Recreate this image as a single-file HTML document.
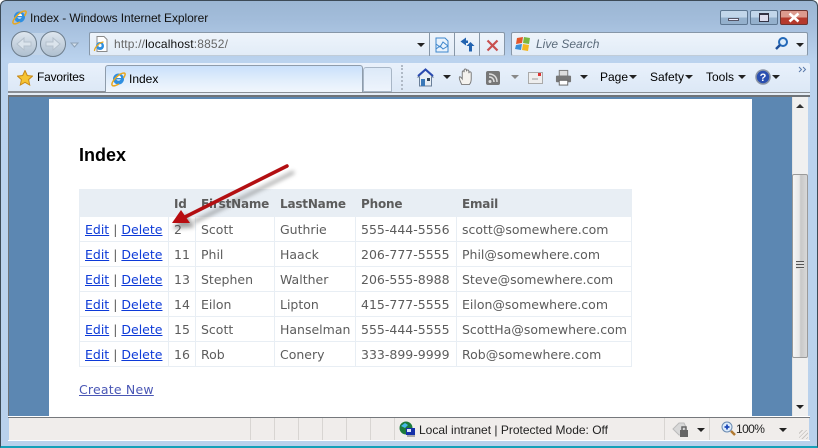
<!DOCTYPE html>
<html><head><meta charset="utf-8"><style>
*{box-sizing:border-box}
html,body{margin:0;padding:0;width:818px;height:448px;overflow:hidden;background:#fff}
body{position:relative;font-family:"Liberation Sans",sans-serif}
.a{position:absolute}
.t{position:absolute;white-space:nowrap;font:12px "Liberation Sans",sans-serif;color:#000}
.c{position:absolute;white-space:nowrap;font:12.5px/16px "DejaVu Sans",sans-serif;color:#5c5c5c;margin-top:1px}
.h{font:bold 12px/16px "DejaVu Sans",sans-serif;color:#5c5c5c;letter-spacing:-.2px}
.c u{color:#0d3ad8;text-decoration:underline}
.v{position:absolute;width:1px;background:#e8eef4}
.g{position:absolute;height:1px;background:#e8eef4;left:79px;width:553px}
.s{position:absolute;top:418px;height:22px;width:1px;background:#d8d5d2}
.tb{position:absolute;font:12px "Liberation Sans",sans-serif;top:69px;color:#000;white-space:nowrap}
.ar{position:absolute;width:0;height:0;border-left:4px solid transparent;border-right:4px solid transparent;border-top:4px solid #222}
</style></head><body>
<div class="a" style="left:0;top:0;width:818px;height:448px;background:linear-gradient(#9bb6d3 0,#a3bddb 20px,#bbd3ee 60px,#b9d1ec 100%);border:1px solid #3c4a56;border-bottom:2px solid #16a0b8;border-radius:6px 6px 0 0"></div>

<!-- title -->
<svg class="a" style="left:11px;top:9px" width="16" height="16" viewBox="0 0 16 16"><circle cx="8.500" cy="8" r="5.500" fill="#2f8fe0"/><circle cx="8.500" cy="7" r="2.600" fill="#fff"/><rect x="5" y="7" width="8" height="1.400" fill="#2f8fe0"/><path d="M2 14C1 11 9 2 14 2c2 0 1 3-.5 5M2 14c1 2 5 0 7-1" fill="none" stroke="#e8a820" stroke-width="1.500"/></svg>
<div class="t" style="left:30px;top:10px;line-height:16px;letter-spacing:-.08px;color:#111">Index - Windows Internet Explorer</div>

<!-- window buttons -->
<div class="a" style="left:720px;top:10px;width:28px;height:15px;border:1px solid #5d7690;border-radius:2px;background:linear-gradient(#c2d6ea 50%,#94b0cc 50%)"></div>
<div class="a" style="left:728px;top:18px;width:11px;height:3px;background:#eef;border:1px solid #556"></div>
<div class="a" style="left:750px;top:10px;width:28px;height:15px;border:1px solid #5d7690;border-radius:2px;background:linear-gradient(#c2d6ea 50%,#94b0cc 50%)"></div>
<div class="a" style="left:759px;top:13px;width:10px;height:9px;background:#dde;border:1px solid #334;border-top-width:2px"></div>
<div class="a" style="left:780px;top:10px;width:28px;height:15px;border:1px solid #6e3430;border-radius:2px;background:linear-gradient(#dc9a8e 50%,#b5392c 50%)"></div>
<svg class="a" style="left:788px;top:12px" width="12" height="11" viewBox="0 0 12 11"><path d="M1.500 1.500l9 8M10.500 1.500l-9 8" stroke="#fff" stroke-width="2.600"/></svg>

<!-- nav -->
<svg class="a" style="left:10px;top:30px" width="72" height="28" viewBox="0 0 72 28">
<rect x="8" y="3" width="48" height="22" rx="10" fill="#c2d4e8"/>
<defs><linearGradient id="b" x1="0" y1="0" x2="0" y2="1"><stop offset="0" stop-color="#dfe7ef"/><stop offset="1" stop-color="#aebfcf"/></linearGradient></defs>
<circle cx="14" cy="14" r="12.500" fill="url(#b)" stroke="#6d7d8c"/><circle cx="43" cy="14" r="12.500" fill="url(#b)" stroke="#6d7d8c"/>
<path d="M21 12h-7V8l-7 6 7 6v-4h7z" fill="#dbe4ec" stroke="#b4c0cc"/><path d="M36 12h7V8l7 6-7 6v-4h-7z" fill="#dbe4ec" stroke="#b4c0cc"/>
<path d="M61 13h7l-3.500 4z" fill="#d4e0ec" stroke="#8ea2b6"/></svg>

<!-- address -->
<div class="a" style="left:89px;top:32px;width:416px;height:24px;background:linear-gradient(#eef4fb,#e2ecf7);border:1px solid #8797a8;border-bottom-color:#c0ccd8;border-radius:2px"></div>
<svg class="a" style="left:93px;top:36px" width="16" height="16" viewBox="0 0 16 16"><path d="M4 .5h7l3 3v12H4z" fill="#fff" stroke="#8a8a8a"/><circle cx="7" cy="10" r="4" fill="#2f8fe0"/><circle cx="7" cy="9.500" r="1.600" fill="#fff"/><path d="M1.500 15C1 12 7 6 10.500 6" fill="none" stroke="#e8a820" stroke-width="1.300"/></svg>
<div class="t" style="left:114px;top:37px;line-height:15px;letter-spacing:.15px;color:#666">http://<span style="color:#111">localhost</span>:8852/</div>
<div class="ar" style="left:417px;top:43px"></div>
<div class="a" style="left:429px;top:32px;width:1px;height:24px;background:#8797a8"></div>
<div class="a" style="left:454px;top:32px;width:1px;height:24px;background:#8797a8"></div>
<div class="a" style="left:479px;top:32px;width:1px;height:24px;background:#8797a8"></div>
<svg class="a" style="left:435px;top:37px" width="14" height="16" viewBox="0 0 14 16"><path d="M1 1h9l3 3v11H1z" fill="#e8f2fc" stroke="#3d86cc"/><path d="M1 7l4 3 3-5 5 4M1 12l4-3 3 3 5-3" fill="none" stroke="#3d86cc"/></svg>
<svg class="a" style="left:459px;top:37px" width="16" height="16" viewBox="0 0 16 16"><path d="M7 .5L1.500 4.500 7 8.500V6h2V3.500H7z" fill="#2263b0"/><path d="M10 14.500V9H7.500l4-4 4 4H13v5.500z" fill="#2263b0"/></svg>
<svg class="a" style="left:486px;top:39px" width="13" height="13" viewBox="0 0 13 13"><path d="M1.500 1.500l10 10M11.500 1.500l-10 10" stroke="#c85050" stroke-width="2.200"/></svg>

<!-- search -->
<div class="a" style="left:511px;top:32px;width:297px;height:24px;background:linear-gradient(#eef4fb,#e2ecf7);border:1px solid #8797a8;border-bottom-color:#c0ccd8;border-radius:2px"></div>
<svg class="a" style="left:515px;top:36px" width="16" height="16" viewBox="0 0 16 16"><path d="M2 2l6-1-1 6-6 1z" fill="#e2562a"/><path d="M9 1l6 1-1 6-6-1z" fill="#7ab840"/><path d="M1 9l6-1-1 6-6-1z" fill="#3a8fd8"/><path d="M8 8l6 1-1 6-6-1z" fill="#f4b820"/></svg>
<div class="t" style="left:536px;top:37px;font:italic 12px/15px 'Liberation Sans',sans-serif;color:#5a6a7a">Live Search</div>
<svg class="a" style="left:773px;top:36px" width="16" height="16" viewBox="0 0 16 16"><circle cx="10" cy="6" r="4" fill="#dcecfb" stroke="#2268b8" stroke-width="2"/><path d="M7 9l-4 4" stroke="#1e4f9a" stroke-width="2.500"/></svg>
<div class="ar" style="left:796px;top:43px"></div>

<!-- toolbar -->
<div class="a" style="left:8px;top:63px;width:802px;height:29px;background:linear-gradient(#e9f1fb,#dce8f6);border-radius:2px 2px 0 0"></div>
<div class="a" style="left:8px;top:91px;width:98px;height:1px;background:#8a8f96"></div>
<svg class="a" style="left:17px;top:70px" width="16" height="16" viewBox="0 0 16 16"><path d="M8 .5l2.300 5 5.200.6-3.900 3.500 1.100 5.400L8 12.300 3.300 15l1.100-5.400L.5 6.100l5.200-.6z" fill="#f6c432" stroke="#c88a18"/></svg>
<div class="tb" style="left:37px;top:70px;letter-spacing:-.2px">Favorites</div>
<div class="a" style="left:105px;top:65px;width:258px;height:28px;background:linear-gradient(#c9e0fb,#e2eefb 55%,#f2f7fd);border:1px solid #8e9cab;border-bottom:none;border-radius:3px 3px 0 0"></div>
<svg class="a" style="left:110px;top:71px" width="16" height="16" viewBox="0 0 16 16"><circle cx="8.500" cy="8" r="5.500" fill="#2f8fe0"/><circle cx="8.500" cy="7" r="2.600" fill="#fff"/><rect x="5" y="7" width="8" height="1.400" fill="#2f8fe0"/><path d="M2 14C1 11 9 2 14 2c2 0 1 3-.5 5M2 14c1 2 5 0 7-1" fill="none" stroke="#e8a820" stroke-width="1.500"/></svg>
<div class="tb" style="left:129px;top:72px">Index</div>
<div class="a" style="left:363px;top:67px;width:29px;height:25px;background:linear-gradient(#dce9f8,#eef4fc);border:1px solid #a8b6c6;border-radius:3px 3px 0 0"></div>
<div class="a" style="left:401px;top:65px;height:25px;border-left:2px dotted #b0bac6"></div>

<svg class="a" style="left:416px;top:68px" width="19" height="19" viewBox="0 0 19 19"><path d="M9.500 2L2 9h1.500v9h12V9H17z" fill="#e8eef4" stroke="#6a7f99"/><path d="M2 8l7.500-6.500L17 8" fill="none" stroke="#2a4ab0" stroke-width="2"/><rect x="5" y="11" width="4" height="7" fill="#3a78b8"/><rect x="11" y="10" width="3" height="3" fill="#345"/></svg>
<div class="ar" style="left:443px;top:75px"></div>
<svg class="a" style="left:458px;top:68px" width="17" height="19" viewBox="0 0 18 19"><path d="M4 17C2 13 1 10 1.500 9s2 .5 3 2V4c0-2 2-2 2 0V2c0-2 2.500-2 2.500 0v1c0-2 2.500-2 2.500 0v2c0-2 2.500-2 2.500 0v6c0 3-1 5-2 6z" fill="#f4f2ee" stroke="#777"/></svg>
<svg class="a" style="left:486px;top:71px" width="14" height="14" viewBox="0 0 14 14"><rect width="14" height="14" rx="2" fill="#777"/><circle cx="4" cy="10.500" r="1.500" fill="#ddd"/><path d="M3 6c3 0 5 2 5 5M3 3c5 0 8 3 8 8" fill="none" stroke="#ddd" stroke-width="1.500"/></svg>
<div class="ar" style="left:511px;top:75px;border-top-color:#888"></div>
<svg class="a" style="left:528px;top:71px" width="15" height="13" viewBox="0 0 15 13"><rect x=".5" y="1.500" width="14" height="11" fill="#eee" stroke="#aaa"/><path d="M4 8h6" stroke="#999"/><rect x="10" y="2" width="3" height="3" fill="#d33"/></svg>
<svg class="a" style="left:555px;top:69px" width="17" height="17" viewBox="0 0 18 18"><rect x="4.500" y="1.500" width="9" height="6" fill="#ddd" stroke="#777"/><rect x="1" y="7" width="16" height="7" rx="1" fill="#777"/><rect x="4.500" y="12" width="9" height="5" fill="#fff" stroke="#666"/></svg>
<div class="ar" style="left:580px;top:75px"></div>
<div class="tb" style="left:600px;top:70px">Page</div><div class="ar" style="left:629px;top:75px"></div>
<div class="tb" style="left:650px;top:70px">Safety</div><div class="ar" style="left:685px;top:75px"></div>
<div class="tb" style="left:706px;top:70px">Tools</div><div class="ar" style="left:738px;top:75px"></div>
<svg class="a" style="left:755px;top:69px" width="16" height="16" viewBox="0 0 16 16"><circle cx="8" cy="8" r="7" fill="#2a4fb0" stroke="#8a94a4" stroke-width="1.500"/><text x="8" y="12" text-anchor="middle" font-family="Liberation Sans" font-weight="bold" font-size="11" fill="#fff">?</text></svg>
<div class="ar" style="left:772px;top:75px"></div>
<svg class="a" style="left:798px;top:66px" width="9" height="7" viewBox="0 0 9 7"><path d="M1 1l2.500 2.500L1 6M5 1l2.500 2.500L5 6" fill="none" stroke="#5a7aaa"/></svg>

<!-- content frame -->
<div class="a" style="left:8px;top:92px;width:802px;height:1px;background:#8a8f96"></div>
<div class="a" style="left:8px;top:93px;width:802px;height:2px;background:#e4ecf5"></div>
<div class="a" style="left:8px;top:95px;width:802px;height:2px;background:#6f7378"></div>
<div class="a" style="left:9px;top:97px;width:783px;height:319px;background:#5c87b2"></div>
<div class="a" style="left:8px;top:97px;width:1px;height:319px;background:#6f7378"></div>
<div class="a" style="left:49px;top:99px;width:703px;height:317px;background:#fff"></div>

<!-- scrollbar -->
<div class="a" style="left:792px;top:97px;width:16px;height:319px;background:#f0f0f0;border-left:1px solid #e4e4e4"></div>
<div class="ar" style="left:796px;top:104px;border-top:none;border-bottom:4px solid #333"></div>
<div class="ar" style="left:796px;top:405px"></div>
<div class="a" style="left:792px;top:174px;width:16px;height:184px;border:1px solid #9a9a9a;border-radius:2px;background:linear-gradient(90deg,#f6f6f6,#e8e8e8 45%,#c8c8c8 55%,#d8d8d8)"></div>
<div class="a" style="left:796px;top:261px;width:8px;height:8px;background:repeating-linear-gradient(#555 0 1px,#ddd 1px 3px)"></div>

<!-- page -->
<div class="t" style="left:79px;top:145px;font:bold 18px/20px 'Liberation Sans',sans-serif;color:#000">Index</div>
<div class="a" style="left:79px;top:189px;width:553px;height:28px;background:#e8eef4"></div>
<div class="g" style="top:241px"></div><div class="g" style="top:266px"></div><div class="g" style="top:291px"></div><div class="g" style="top:316px"></div><div class="g" style="top:341px"></div><div class="g" style="top:366px"></div>
<div class="v" style="left:79px;top:217px;height:150px"></div>
<div class="v" style="left:168px;top:217px;height:150px"></div>
<div class="v" style="left:195px;top:217px;height:150px"></div>
<div class="v" style="left:274px;top:217px;height:150px"></div>
<div class="v" style="left:355px;top:217px;height:150px"></div>
<div class="v" style="left:456px;top:217px;height:150px"></div>
<div class="v" style="left:631px;top:217px;height:150px"></div>

<div class="c h" style="left:174px;top:195px">Id</div>
<div class="c h" style="left:201px;top:195px">FirstName</div>
<div class="c h" style="left:280px;top:195px">LastName</div>
<div class="c h" style="left:361px;top:195px">Phone</div>
<div class="c h" style="left:462px;top:195px">Email</div>

<div class="c" style="left:85px;top:221px"><u>Edit</u> | <u>Delete</u></div><div class="c" style="left:174px;top:221px">2</div><div class="c" style="left:201px;top:221px">Scott</div><div class="c" style="left:280px;top:221px">Guthrie</div><div class="c" style="left:361px;top:221px">555-444-5556</div><div class="c" style="left:462px;top:221px">scott@somewhere.com</div>
<div class="c" style="left:85px;top:246px"><u>Edit</u> | <u>Delete</u></div><div class="c" style="left:174px;top:246px">11</div><div class="c" style="left:201px;top:246px">Phil</div><div class="c" style="left:280px;top:246px">Haack</div><div class="c" style="left:361px;top:246px">206-777-5555</div><div class="c" style="left:462px;top:246px">Phil@somewhere.com</div>
<div class="c" style="left:85px;top:271px"><u>Edit</u> | <u>Delete</u></div><div class="c" style="left:174px;top:271px">13</div><div class="c" style="left:201px;top:271px">Stephen</div><div class="c" style="left:280px;top:271px">Walther</div><div class="c" style="left:361px;top:271px">206-555-8988</div><div class="c" style="left:462px;top:271px">Steve@somewhere.com</div>
<div class="c" style="left:85px;top:296px"><u>Edit</u> | <u>Delete</u></div><div class="c" style="left:174px;top:296px">14</div><div class="c" style="left:201px;top:296px">Eilon</div><div class="c" style="left:280px;top:296px">Lipton</div><div class="c" style="left:361px;top:296px">415-777-5555</div><div class="c" style="left:462px;top:296px">Eilon@somewhere.com</div>
<div class="c" style="left:85px;top:321px"><u>Edit</u> | <u>Delete</u></div><div class="c" style="left:174px;top:321px">15</div><div class="c" style="left:201px;top:321px">Scott</div><div class="c" style="left:280px;top:321px">Hanselman</div><div class="c" style="left:361px;top:321px">555-444-5555</div><div class="c" style="left:462px;top:321px">ScottHa@somewhere.com</div>
<div class="c" style="left:85px;top:346px"><u>Edit</u> | <u>Delete</u></div><div class="c" style="left:174px;top:346px">16</div><div class="c" style="left:201px;top:346px">Rob</div><div class="c" style="left:280px;top:346px">Conery</div><div class="c" style="left:361px;top:346px">333-899-9999</div><div class="c" style="left:462px;top:346px">Rob@somewhere.com</div>

<div class="c" style="left:79px;top:381px;color:#4a57b5;text-decoration:underline;letter-spacing:.2px">Create New</div>

<!-- arrow -->
<svg class="a" style="left:165px;top:160px" width="140" height="80" viewBox="0 0 140 80">
<defs><filter id="f" x="-20%" y="-20%" width="140%" height="140%"><feGaussianBlur stdDeviation="2"/></filter></defs>
<path d="M125 8L25 58 M7 63l10-11 6 10z" fill="#555" stroke="#555" stroke-width="3" opacity=".55" filter="url(#f)" transform="translate(4,4)"/>
<path d="M122 6L20 57" stroke="#b30f12" stroke-width="3.500" stroke-linecap="round"/>
<path d="M7 63l9-13 9 13z" fill="#b80c10"/>
</svg>

<!-- status -->
<div class="a" style="left:8px;top:416px;width:802px;height:2px;background:linear-gradient(#fff 50%,#75787c 50%)"></div>
<div class="a" style="left:9px;top:418px;width:800px;height:22px;background:#f0edeb"></div>
<div class="a" style="left:8px;top:440px;width:802px;height:1px;background:#fff"></div>
<div class="s" style="left:250px"></div><div class="s" style="left:274px"></div><div class="s" style="left:298px"></div><div class="s" style="left:322px"></div><div class="s" style="left:346px"></div><div class="s" style="left:370px"></div><div class="s" style="left:394px"></div><div class="s" style="left:664px"></div><div class="s" style="left:709px"></div>
<svg class="a" style="left:399px;top:421px" width="16" height="17" viewBox="0 0 16 17"><circle cx="7" cy="7" r="6.500" fill="#1c7a3c"/><path d="M2 5l4-3 3 2-3 3zM9 9l3-2 1 3-3 2z" fill="#48b8e8"/><rect x="7" y="7" width="9" height="7" fill="#1530a8"/><rect x="8" y="8" width="4" height="3" fill="#dfe8f8"/><path d="M8 15h8" stroke="#aaa" stroke-width="2"/></svg>
<div class="t" style="left:419px;top:422px;line-height:16px;color:#222">Local intranet | Protected Mode: Off</div>
<svg class="a" style="left:672px;top:421px" width="18" height="17" viewBox="0 0 18 17"><path d="M1 8l6-6h5l2 4-4 8H7z" fill="#d8d8d8" stroke="#bbb"/><rect x="8" y="9" width="8" height="7" fill="#666"/><path d="M10 9V6h4v3" fill="none" stroke="#666" stroke-width="1.500"/></svg>
<div class="ar" style="left:697px;top:428px"></div>
<svg class="a" style="left:721px;top:421px" width="15" height="15" viewBox="0 0 15 15"><circle cx="6" cy="6" r="5" fill="#dcebfb" stroke="#6a8ab0"/><path d="M3.500 6h5M6 3.500v5" stroke="#1c48b8" stroke-width="1.800"/><path d="M10 10l4 4" stroke="#b07830" stroke-width="2.500"/></svg>
<div class="t" style="left:736px;top:421px;line-height:16px;letter-spacing:-.6px;color:#222">100%</div>
<div class="ar" style="left:779px;top:428px"></div>
<div class="a" style="left:799px;top:430px;width:9px;height:9px;background:repeating-linear-gradient(135deg,transparent 0 2px,#c8c5c2 2px 3px)"></div>
</body></html>
